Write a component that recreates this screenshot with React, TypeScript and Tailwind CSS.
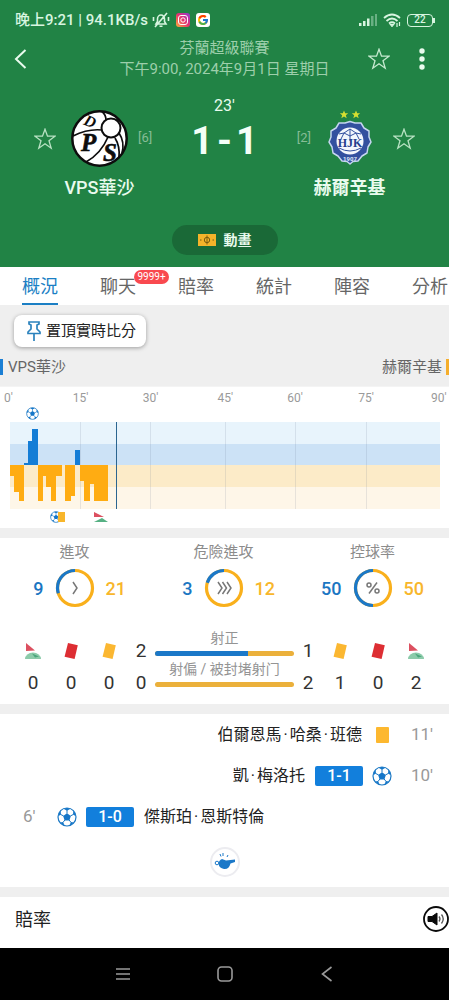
import React from 'react';
import { FcGoogle } from 'react-icons/fc';

const Star: React.FC<{ className?: string }> = ({ className }) => (
  <svg viewBox="0 0 22 22" className={`w-[22px] h-[22px] ${className ?? ''}`} fill="none" stroke="currentColor" strokeWidth="1.3">
    <path d="M11 1.2 13.5 8.2H21L15 12.7 17.2 20.2 11 15.8 4.8 20.2 7 12.7 1 8.2H8.5Z" />
  </svg>
);

const Ball: React.FC<{ className?: string }> = ({ className }) => (
  <svg viewBox="0 0 20 20" className={className} fill="none">
    <circle cx="10" cy="10" r="9" fill="#fff" stroke="#1b78c4" strokeWidth="1.2" />
    <path d="M10 6.2 13.8 9 12.4 13.4H7.6L6.2 9Z" fill="#1576c8" />
    <path d="M6.5 1.8 10 3.8 13.5 1.8A9 9 0 0 0 6.5 1.8ZM1.2 9.3 4 7.6 3.6 3.8A9 9 0 0 0 1.2 9.3ZM18.8 9.3 16 7.6 16.4 3.8A9 9 0 0 1 18.8 9.3ZM3 15.6 6.1 15.1 7.6 18.6A9 9 0 0 1 3 15.6ZM17 15.6 13.9 15.1 12.4 18.6A9 9 0 0 0 17 15.6Z" fill="#1576c8" />
    <path d="M10 6.5V3.2M13.4 9 16.4 7.4M12.1 13 14 15.4M7.9 13 6 15.4M6.6 9 3.6 7.4" stroke="#1b78c4" strokeWidth="1" />
  </svg>
);

const Card: React.FC<{ className: string }> = ({ className }) => (
  <svg viewBox="0 0 16 18" className={`w-4 h-[18px] ${className}`}>
    <path d="M5 1 14.8 3.2 11.6 17 1.6 14.8Z" fill="currentColor" />
  </svg>
);

const Corner: React.FC<{ className: string }> = ({ className }) => (
  <svg viewBox="0 0 18 18" className={className}>
    <path d="M2 1 11 8.5 2 9Z" fill="#dc5060" />
    <path d="M1 17A8 6.5 0 0 1 17 17Z" fill="#8ccbaa" />
    <path d="M8 11.5 15 14.5 11 15.5Z" fill="#4aa57c" />
  </svg>
);

const VpsLogo = () => (
  <svg viewBox="0 0 57 57" className="w-[57px] h-[57px]">
    <circle cx="28.5" cy="28.5" r="27.2" fill="#fff" stroke="#0d0d0d" strokeWidth="2.5" />
    <g fill="none" stroke="#0d0d0d" strokeWidth="1.7">
      <path d="M2 26C12 21 22 19 31 20M35 10Q35 5 31 1.5M45 10 49 10M48 23Q54 32 51 43M37 27C32 39 24 47 15 52M44 28Q49 36 48 47" />
      <circle cx="40" cy="18" r="9.5" strokeWidth="2" />
    </g>
    <g fill="#0d0d0d" fontFamily="Liberation Serif, serif" fontWeight="bold" fontStyle="italic">
      <text x="14" y="17" fontSize="16" transform="rotate(22 20 10)">D</text>
      <text x="10" y="41" fontSize="25" stroke="#0d0d0d" strokeWidth="0.6">P</text>
      <text x="32" y="51" fontSize="25" stroke="#0d0d0d" strokeWidth="0.6">S</text>
    </g>
  </svg>
);

const HjkLogo = () => (
  <svg viewBox="0 0 44 56" className="w-11 h-14">
    <path d="M16 .5 17.2 3.3H20.2L17.8 5.2 18.7 8.2 16 6.4 13.3 8.2 14.2 5.2 11.8 3.3H14.8ZM28 .5 29.2 3.3H32.2L29.8 5.2 30.7 8.2 28 6.4 25.3 8.2 26.2 5.2 23.8 3.3H26.8Z" fill="#d6df31" />
    <path d="M22 11.5 27 13 33 13 36 18 41 21 41 27 43 32 40 37 39 43 34 46 30 51 25 51.5 22 54 19 51.5 14 51 10 46 5 43 4 37 1 32 3 27 3 21 8 18 11 13 17 13Z" fill="#33509f" stroke="#c5d5ef" strokeWidth="1.5" strokeLinejoin="round" />
    <circle cx="22" cy="31" r="13.5" fill="#f4f7fd" />
    <path d="M22 19 16 23 11 24M22 19 28 23 33 24M16 23 22 26 28 23M22 19V31M11 38Q22 44 33 38M16 23 13 29M28 23 31 29" fill="none" stroke="#33509f" strokeWidth="1" />
    <text x="22" y="37" textAnchor="middle" fontSize="12" fontWeight="bold" fontFamily="Liberation Serif, serif" fill="#253f8d">HJK</text>
    <text x="22" y="51" textAnchor="middle" fontSize="6" fontWeight="bold" fontFamily="Roboto, sans-serif" fill="#dfe8fa">1907</text>
  </svg>
);

const StatusBar = () => (
  <div className="flex items-center h-[38px] pl-[15px] pr-4 pt-[2px] text-[15px] font-medium text-[#d8f5e0]">
    <span className="whitespace-nowrap">晚上9:21 | 94.1KB/s</span>
    <svg viewBox="0 0 18 16" className="w-[18px] h-4 ml-1" fill="none" stroke="currentColor" strokeWidth="1.6">
      <path d="M4 12H14L12.5 9.5V7A3.5 4 0 0 0 5.5 7V9.5ZM7.5 14.2H10.5M3 15 15 1M1.5 5V9M16.5 5V9" />
    </svg>
    <svg viewBox="0 0 14 14" className="w-[14px] h-[14px] ml-[6px]">
      <defs>
        <linearGradient id="ig" x1="0" y1="1" x2="1" y2="0">
          <stop offset="0" stopColor="#fdb13a" />
          <stop offset=".5" stopColor="#e8316e" />
          <stop offset="1" stopColor="#8b3ad8" />
        </linearGradient>
      </defs>
      <rect width="14" height="14" rx="3" fill="url(#ig)" />
      <rect x="2.5" y="2.5" width="9" height="9" rx="2.5" fill="none" stroke="#fff" />
      <circle cx="7" cy="7" r="2.2" fill="none" stroke="#fff" />
    </svg>
    <span className="flex items-center justify-center w-[14px] h-[14px] ml-[6px] rounded-[3px] bg-white">
      <FcGoogle size={12} />
    </span>
    <svg viewBox="0 0 18 12" className="w-[18px] h-3 ml-auto" fill="currentColor">
      <path d="M0 9h2.5v3H0zM4 7h2.5v5H4zM8 4.5h2.5V12H8z" />
      <path d="M12 2h2.5v10H12zM16 0h2v12h-2z" opacity=".4" />
    </svg>
    <svg viewBox="0 0 18 14" className="w-[18px] h-[14px] ml-[6px]" fill="none" stroke="currentColor" strokeWidth="1.8">
      <path d="M1 5Q9-2 17 5M3.5 8Q9 3 14.5 8M6 10.5Q9 8 12 10.5" />
      <path d="M7.5 11.5H10.5L9 13.5ZM14 10V14M16.5 9V13" strokeWidth="1.2" />
    </svg>
    <span className="relative flex items-center justify-center w-[26px] h-[13px] ml-[6px] border border-current rounded-[4px] text-[10px] leading-none">
      22
      <span className="absolute -right-[3px] top-[3px] w-[2px] h-[5px] bg-current"></span>
    </span>
  </div>
);

const TABS = ['概況', '聊天', '賠率', '統計', '陣容', '分析'];

// [x, width, height] in chart units, grown from the middle line
const HOME_BARS = [[14, 4, 2], [18, 4, 24], [22, 6, 36], [65, 5, 15]];
const AWAY_BARS = [
  [0, 4, 11], [4, 5, 27], [9, 5, 36], [28, 5, 36], [33, 3, 11], [36, 5, 22], [41, 5, 36], [46, 6, 11],
  [55, 6, 36], [61, 4, 31], [70, 4, 16], [74, 6, 36], [80, 4, 19], [84, 14, 36],
];

const MomentumChart = () => (
  <section className="h-[141px] bg-white">
    <div className="grid grid-cols-[69fr_70fr_75fr_70fr_71fr_73fr_18fr] h-[20px] pl-1 pt-[1px] text-[12px] leading-5 text-[#9a9a9a]">
      {['0', '15', '30', '45', '60', '75', '90'].map((m) => (
        <span key={m}>{m}'</span>
      ))}
    </div>
    <div className="h-[15px] pl-[26px]">
      <Ball className="w-[13px] h-[13px]" />
    </div>
    <svg viewBox="0 0 430 87" preserveAspectRatio="none" className="block w-[calc(100%-19px)] h-[87px] ml-[10px]">
      <rect width="430" height="22" fill="#e8f4fc" />
      <rect y="22" width="430" height="21" fill="#cce2f6" />
      <rect y="43" width="430" height="22" fill="#fcebc8" />
      <rect y="65" width="430" height="22" fill="#fef6e8" />
      {[70, 140, 215, 285, 356].map((x) => (
        <rect key={x} x={x} width="1" height="87" fill="#64748b" opacity=".15" />
      ))}
      {HOME_BARS.map(([x, w, h]) => (
        <rect key={x} x={x} y={43 - h} width={w} height={h} fill="#147dd6" />
      ))}
      {AWAY_BARS.map(([x, w, h]) => (
        <rect key={x} x={x} y="43" width={w} height={h} fill="#ffac12" />
      ))}
      <rect x="106" width="1" height="87" fill="#2b6590" />
    </svg>
    <div className="flex items-center h-4 pl-[50px]">
      <Ball className="w-3 h-3" />
      <span className="-ml-1 w-[7px] h-[10px] bg-[#f8b62b]"></span>
      <svg viewBox="0 0 16 12" className="w-4 h-3 ml-7">
        <path d="M1 1 11 6H1Z" fill="#dc5060" />
        <path d="M1 11 9 7 15 11Z" fill="#56b083" />
      </svg>
    </div>
  </section>
);

interface RingStatProps {
  label: string;
  home: number;
  away: number;
  children: React.ReactNode;
}

const RingStat: React.FC<RingStatProps> = ({ label, home, away, children }) => {
  const share = (home / (home + away)) * 100;
  return (
    <div className="flex flex-col items-center gap-[6px]">
      <span className="text-[15px] leading-5 text-[#8c8c8c]">{label}</span>
      <div className="flex items-center gap-[11px] text-[18px] font-medium">
        <span className="w-6 text-right text-[#1b76c2]">{home}</span>
        <svg viewBox="0 0 40 40" className="w-10 h-10" fill="none">
          <circle cx="20" cy="20" r="17.5" stroke="#f9b01c" strokeWidth="3.2" />
          <circle
            cx="20" cy="20" r="17.5" stroke="#1b78c8" strokeWidth="3.2" pathLength="100"
            strokeDasharray={`${share} 100`} transform="rotate(-90 20 20) matrix(1 0 0 -1 0 40)"
          />
          <g stroke="#777" strokeWidth="1.5">{children}</g>
        </svg>
        <span className="w-6 text-[#f8b62b]">{away}</span>
      </div>
    </div>
  );
};

const Count: React.FC<{ icon: React.ReactNode; value: number; narrow?: boolean }> = ({ icon, value, narrow }) => (
  <div className={`${narrow ? 'w-[26px]' : 'w-[38px]'} flex flex-col items-center`}>
    <span className="h-8 flex items-center">{icon}</span>
    <span className="h-8 leading-8">{value}</span>
  </div>
);

const ShotBar: React.FC<{ label: string; home: number; away: number }> = ({ label, home, away }) => (
  <div>
    <div className="text-center text-[14px] leading-5 text-[#949494] whitespace-nowrap">{label}</div>
    <div className="flex h-[5px] mt-[3px] mx-[1px] rounded-full overflow-hidden bg-[#ebb03b]">
      <div className="bg-[#1b78c8]" style={{ width: `${(home / (home + away)) * 100}%` }}></div>
    </div>
  </div>
);

const PlayerName: React.FC<{ name: string }> = ({ name }) => (
  <span className="text-[16px] text-[#222] whitespace-nowrap">
    {name.split('·').map((part, i) => (
      <React.Fragment key={i}>
        {i > 0 && <span className="mx-[2px]">·</span>}
        {part}
      </React.Fragment>
    ))}
  </span>
);

const ScoreTag: React.FC<{ children: string }> = ({ children }) => (
  <span className="w-12 h-5 rounded-[2px] bg-[#127fdc] text-white text-[16px] leading-5 text-center font-medium">{children}</span>
);

export default function App() {
  return (
    <div className="w-full overflow-hidden bg-[#efefef] font-['Roboto','Noto_Sans_CJK_TC',sans-serif]">
      <header className="bg-[#218345] pb-3 text-[#e9fbee]">
        <StatusBar />
        <div className="flex items-center h-[42px]">
          <button aria-label="返回" className="w-[81px] pl-[14px]">
            <svg viewBox="0 0 13 20" className="w-[13px] h-5" fill="none" stroke="currentColor" strokeWidth="2">
              <path d="M11.5 1 2 10 11.5 19" />
            </svg>
          </button>
          <div className="flex-1 text-center text-[15px] leading-[21px] text-[#9dcfab] whitespace-nowrap">
            <p>芬蘭超級聯賽</p>
            <p>下午9:00, 2024年9月1日 星期日</p>
          </div>
          <div className="w-[81px] flex items-center gap-[29px]">
            <button aria-label="收藏" className="text-[#c6ead0]"><Star /></button>
            <button aria-label="更多">
              <svg viewBox="0 0 6 22" className="w-[6px] h-[22px]" fill="currentColor">
                <circle cx="3" cy="3" r="2.7" />
                <circle cx="3" cy="11" r="2.7" />
                <circle cx="3" cy="19" r="2.7" />
              </svg>
            </button>
          </div>
        </div>

        <div className="flex items-start px-[34px] mt-[18px]">
          <button aria-label="收藏主隊" className="mt-3 h-[57px] text-[#b8e2c3]"><Star /></button>
          <div className="flex flex-col items-center w-[57px] mt-3 ml-[15px]">
            <VpsLogo />
            <span className="mt-[9px] text-[18px] leading-6 font-medium whitespace-nowrap">VPS華沙</span>
          </div>
          <span className="mt-3 ml-[10px] text-[13px] leading-[56px] text-[#86bd96]">[6]</span>
          <div className="flex-1 flex flex-col items-center">
            <div className="text-[16px] leading-4">23'</div>
            <div className="flex gap-1 mt-[5px] text-[38px] leading-[44px] font-bold text-[#f4fff7]">
              <span>1</span>
              <span>-</span>
              <span>1</span>
            </div>
          </div>
          <span className="mt-3 mr-[10px] text-[13px] leading-[56px] text-[#86bd96]">[2]</span>
          <div className="flex flex-col items-center w-[57px] mt-3 mr-[15px]">
            <div className="h-[57px]"><HjkLogo /></div>
            <span className="mt-[9px] text-[18px] leading-6 font-bold whitespace-nowrap">赫爾辛基</span>
          </div>
          <button aria-label="收藏客隊" className="mt-3 h-[57px] text-[#b8e2c3]"><Star /></button>
        </div>

        <button className="flex items-center justify-center gap-2 w-[106px] h-[30px] mt-[25px] mx-auto rounded-full bg-[#1a6937] text-[14px] font-bold">
          <svg viewBox="0 0 18 12" className="w-[18px] h-3" fill="none" stroke="#7a5c10">
            <rect width="18" height="12" fill="#f5b32a" stroke="none" />
            <path d="M9 1.5V10.500M2 6H3.500M14.500 6H16" />
            <circle cx="9" cy="6" r="2.700" />
          </svg>
          動畫
        </button>
      </header>

      <nav className="flex gap-[42px] h-[38px] pl-[22px] bg-white text-[18px] text-[#666]">
        {TABS.map((tab, idx) => (
          <button
            key={tab}
            className={`relative shrink-0 h-[38px] pt-[2px] border-b-2 ${idx === 0 ? 'text-[#1b7fc4] border-[#1b7fc4]' : 'border-transparent'}`}
          >
            {tab}
            {idx === 1 && (
              <span className="absolute left-[34px] top-[3px] w-[35px] h-[14px] rounded-full bg-[#f9494f] text-white text-[10px] leading-[14px]">
                9999+
              </span>
            )}
          </button>
        ))}
      </nav>

      <div className="h-[82px] pt-[10px] border-b border-[#f4f4f4]">
        <button className="flex items-center h-8 ml-[14px] pl-[13px] pr-[10px] gap-[5px] rounded-lg bg-white shadow-[0_1px_4px_rgba(0,0,0,0.35)] text-[15px] text-[#222]">
          <svg viewBox="0 0 14 20" className="w-[14px] h-5" fill="none" stroke="#2b82bd" strokeWidth="1.7">
            <path d="M2 1H12V3L10 4V8L13 11V12.5H1V11L4 8V4L2 3ZM7 12.5V20" />
          </svg>
          置頂實時比分
        </button>
        <div className="flex items-center justify-between h-4 mt-3 text-[15px] leading-4 text-[#666]">
          <span className="pl-[5px] border-l-[3px] border-[#1b7fd4]">VPS華沙</span>
          <span className="pr-1 border-r-[3px] border-[#f5ae2c]">赫爾辛基</span>
        </div>
      </div>

      <MomentumChart />

      <section className="h-[166px] mt-[10px] pt-1 bg-white">
        <div className="grid grid-cols-3 pr-[2px]">
          <RingStat label="進攻" home={9} away={21}>
            <path d="M18 14 22 20 18 26" />
          </RingStat>
          <RingStat label="危險進攻" home={3} away={12}>
            <path d="M14 14 18 20 14 26M18.5 14 22.5 20 18.5 26M23 14 27 20 23 26" />
          </RingStat>
          <RingStat label="控球率" home={50} away={50}>
            <path d="M24 14.5 16 25.5" />
            <circle cx="16" cy="17" r="2" />
            <circle cx="24" cy="23" r="2" />
          </RingStat>
        </div>
        <div className="flex mt-5 px-[14px] text-[19px] text-[#333] text-center">
          <div className="flex pt-[7px]">
            <Count icon={<Corner className="w-[18px] h-[18px]" />} value={0} />
            <Count icon={<Card className="text-[#dd2e33]" />} value={0} />
            <Count icon={<Card className="text-[#fbb731]" />} value={0} />
            <Count icon={2} value={0} narrow />
          </div>
          <div className="flex-1 flex flex-col gap-[3px]">
            <ShotBar label="射正" home={2} away={1} />
            <ShotBar label="射偏 / 被封堵射门" home={0} away={2} />
          </div>
          <div className="flex pt-[7px]">
            <Count icon={1} value={2} narrow />
            <Count icon={<Card className="text-[#fbb731]" />} value={1} />
            <Count icon={<Card className="text-[#dd2e33]" />} value={0} />
            <Count icon={<Corner className="w-[18px] h-[18px]" />} value={2} />
          </div>
        </div>
      </section>

      <section className="h-[173px] mt-[10px] bg-white text-[#999]">
        <ul>
          <li className="flex items-center justify-end h-[41px] pr-4">
            <PlayerName name="伯爾恩馬·哈桑·班德" />
            <span className="w-[13px] h-4 ml-[14px] rounded-[1px] bg-[#fdb82f]"></span>
            <span className="w-[22px] ml-[22px] text-[17px]">11'</span>
          </li>
          <li className="flex items-center justify-end h-[41px] pr-4">
            <span className="mr-[10px]"><PlayerName name="凱·梅洛托" /></span>
            <ScoreTag>1-1</ScoreTag>
            <Ball className="w-5 h-5 ml-[9px] mr-[19px]" />
            <span className="w-[22px] text-[17px]">10'</span>
          </li>
          <li className="flex items-center h-[41px] pl-[23px]">
            <span className="w-[34px] text-[17px]">6'</span>
            <Ball className="w-5 h-5 mr-[9px]" />
            <ScoreTag>1-0</ScoreTag>
            <span className="ml-[10px]"><PlayerName name="傑斯珀·恩斯特倫" /></span>
          </li>
        </ul>
        <div className="flex items-center justify-center w-[30px] h-[30px] mt-[10px] mx-auto rounded-full border-2 border-[#ececf0]">
          <svg viewBox="0 0 22 18" className="w-[22px] h-[18px] shrink-0">
            <path d="M8 6 12 7.5 21 6.5V9L16.5 10.5Q15 16.5 10 16 5 15 4.500 10.500 5 7 8 6Z" fill="#1b78c8" />
            <circle cx="3" cy="10" r="1.8" fill="none" stroke="#1b78c8" />
            <path d="M6 1 7 3.5M9 0V3M14 2 13 4" stroke="#1b78c8" />
          </svg>
        </div>
      </section>

      <section className="flex items-center justify-between h-[51px] mt-[10px] pl-[15px] pb-[7px] bg-white">
        <h2 className="text-[18px] text-[#222]">賠率</h2>
        <button aria-label="聲音">
          <svg viewBox="0 0 26 26" className="w-[26px] h-[26px]" fill="none" stroke="#0a0a0a">
            <circle cx="13" cy="13" r="12" strokeWidth="1.8" />
            <path d="M5 10.5H9L14 7V19L9 15.5H5Z" fill="#0a0a0a" />
            <path d="M16 10.5Q18 13 16 15.5M18.5 8.5Q22 13 18.5 17.5" strokeWidth="1.3" stroke="#555" />
          </svg>
        </button>
      </section>

      <footer className="flex items-center justify-center gap-[86px] h-[52px] bg-black text-[#9a9a9a]">
        <button aria-label="選單">
          <svg viewBox="0 0 16 16" className="w-4 h-4" stroke="currentColor" strokeWidth="1.6"><path d="M1 3H15M1 8H15M1 13H15" /></svg>
        </button>
        <button aria-label="主畫面">
          <svg viewBox="0 0 16 16" className="w-4 h-4" fill="none" stroke="currentColor" strokeWidth="1.6"><rect x="1" y="1" width="14" height="14" rx="3.5" /></svg>
        </button>
        <button aria-label="上一頁">
          <svg viewBox="0 0 16 16" className="w-4 h-4" fill="none" stroke="currentColor" strokeWidth="1.6"><path d="M12.5 1 3.5 8 12.5 15" /></svg>
        </button>
      </footer>
    </div>
  );
}
